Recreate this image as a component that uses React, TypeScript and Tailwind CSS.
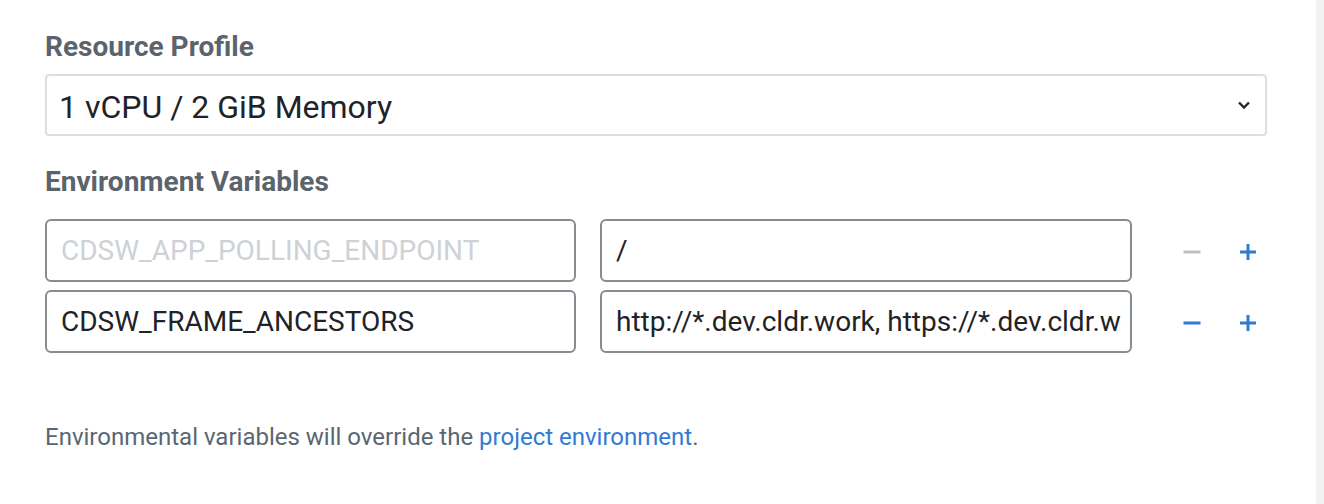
const font = { fontFamily: "Roboto, 'Liberation Sans', sans-serif" };

const Minus = ({ active }: { active: boolean }) => (
  <svg width="20" height="20" viewBox="0 0 20 20" className="block">
    <path d="M1.5 10h17" stroke={active ? "#2f7bd4" : "#bdbfc2"} strokeWidth="3" />
  </svg>
);

const Plus = () => (
  <svg width="20" height="20" viewBox="0 0 20 20" className="block">
    <path d="M2 10h16M10 2v16" stroke="#2f7bd4" strokeWidth="3" />
  </svg>
);

const App = () => {
  const rows = [
    { name: "CDSW_APP_POLLING_ENDPOINT", value: "/", locked: true },
    { name: "CDSW_FRAME_ANCESTORS", value: "http://*.dev.cldr.work, https://*.dev.cldr.work", locked: false },
  ];

  return (
    <div className="flex h-[504px] w-full bg-white overflow-hidden" style={font}>
      <div className="flex-1 pl-[45px] pr-[49px] pt-[30px]">
        {/* Resource Profile */}
        <h2 className="text-[28px] leading-[34px] font-bold text-[#5b646d]">Resource Profile</h2>
        <div className="mt-[10px] h-[62px] flex items-center justify-between rounded-[4px] border-2 border-[#dcdee1] pl-[12px] pr-[14px]">
          <span className="text-[32px] leading-[40px] pt-[3px] text-[#1f2328]">1 vCPU / 2 GiB Memory</span>
          <svg width="14" height="10" viewBox="0 0 14 10">
            <path d="M2 2.5l5 5 5-5" stroke="#23272b" strokeWidth="2.4" fill="none" />
          </svg>
        </div>

        {/* Environment Variables */}
        <h2 className="mt-[29px] text-[28px] leading-[34px] font-bold text-[#5b646d]">Environment Variables</h2>
        <div className="mt-[20px] flex flex-col gap-[8px]">
          {rows.map((row, i) => (
            <div key={i} className="flex items-center">
              <input
                readOnly
                value={row.name}
                className={`w-[531px] h-[63px] rounded-[6px] border-2 border-[#878c92] bg-white px-[14px] text-[28px] outline-none ${row.locked ? "text-[#ced1d5]" : "text-[#1f2328]"}`}
                style={font}
              />
              <input
                readOnly
                value={row.value}
                className="ml-[24px] w-[532px] h-[63px] rounded-[6px] border-2 border-[#878c92] bg-white pl-[14px] pr-[8px] text-[28px] text-[#1f2328] outline-none"
                style={font}
              />
              <div className="ml-[50px] mt-[3px] flex items-center gap-[36px]">
                <Minus active={!row.locked} />
                <Plus />
              </div>
            </div>
          ))}
        </div>

        <p className="mt-[68px] text-[24px] leading-[32px] text-[#5a6672]">
          Environmental variables will override the{" "}
          <span className="text-[#2f7bd4]">project environment</span>.
        </p>
      </div>
      <div className="w-[8px] h-full bg-[#f2f2f2]" />
    </div>
  );
};

export default App;
